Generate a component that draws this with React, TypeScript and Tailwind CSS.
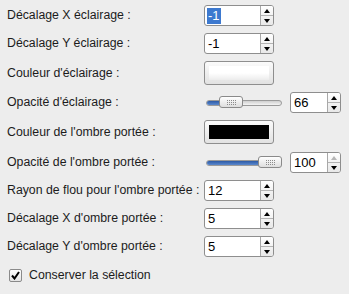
import React from 'react';

const FONT = { fontFamily: '"Liberation Sans", Arial, sans-serif' };

function UpArrow({ disabled }: { disabled?: boolean }) {
  return (
    <div
      className={`h-0 w-0 border-x-[3px] border-b-[4px] border-x-transparent ${
        disabled ? 'border-b-[#b5b5b5]' : 'border-b-black'
      }`}
    />
  );
}

function DownArrow() {
  return <div className="h-0 w-0 border-x-[3px] border-t-[4px] border-x-transparent border-t-black" />;
}

function Spin({
  value,
  selected,
  wide = true,
  upDisabled,
}: {
  value: string;
  selected?: boolean;
  wide?: boolean;
  upDisabled?: boolean;
}) {
  return (
    <div
      className={`flex h-[21px] ${wide ? 'w-[70px]' : 'w-[51px]'} overflow-hidden rounded-[3px] border border-[#8e8e8e] bg-white`}
    >
      <div className="flex flex-1 items-center pl-[2px] text-[13px] text-black">
        <span className={`px-px leading-[16px] ${selected ? 'bg-[#3d79cf] text-white' : ''}`}>{value}</span>
      </div>
      <div className="flex w-[13px] flex-col border-l border-[#a8a8a8] bg-gradient-to-b from-white to-[#e8e8e8]">
        <div className="flex flex-1 items-center justify-center border-b border-[#b3b3b3]">
          <UpArrow disabled={upDisabled} />
        </div>
        <div className="flex flex-1 items-center justify-center">
          <DownArrow />
        </div>
      </div>
    </div>
  );
}

function ColorButton({ color }: { color: 'white' | 'black' }) {
  return (
    <div className="h-[24px] w-[70px] rounded-[3px] border border-[#8e8e8e] bg-gradient-to-b from-[#fbfbfb] to-[#e2e2e2] p-[4px]">
      <div
        className={`h-full w-full ${
          color === 'black' ? 'bg-black' : 'bg-gradient-to-b from-white via-white to-[#ececec]'
        }`}
      />
    </div>
  );
}

function Grip() {
  const dots = [];
  for (let r = 0; r < 3; r++) {
    for (let c = 0; c < 5; c++) {
      dots.push(<rect key={`${r}-${c}`} x={c * 2} y={r * 2} width="1" height="1" fill="#8c8c8c" />);
    }
  }
  return (
    <svg width="9" height="5" viewBox="0 0 9 5">
      {dots}
    </svg>
  );
}

function Slider({ handleLeft }: { handleLeft: number }) {
  return (
    <div className="relative flex h-[21px] w-[80px] items-center px-[2px]">
      <div className="relative h-[6px] w-full overflow-hidden rounded-full border border-[#9a9a9a] bg-gradient-to-b from-[#cfcfcf] to-[#f4f4f4]">
        <div
          className="absolute inset-y-0 left-0 bg-gradient-to-b from-[#2c5aa6] to-[#5b88cc]"
          style={{ width: handleLeft + 4 }}
        />
      </div>
      <div
        className="absolute top-[4px] flex h-[12px] w-[24px] items-center justify-center rounded-[3px] border border-[#8a8a8a] bg-gradient-to-b from-white to-[#dedede]"
        style={{ left: handleLeft + 2 }}
      >
        <Grip />
      </div>
    </div>
  );
}

function Row({ label, children }: { label: string; children: React.ReactNode }) {
  return (
    <div className="flex items-center">
      <div className="w-[204px] shrink-0 whitespace-nowrap pl-[7px] text-[12.3px] text-[#1c1c1c]">{label}</div>
      <div className="flex items-center gap-[6px]">{children}</div>
    </div>
  );
}

export default function App() {
  return (
    <div className="h-[294px] w-[349px] bg-[#ededed]" style={FONT}>
      <div className="flex flex-col gap-[7px] pt-[5px]">
        <Row label="Décalage X éclairage :">
          <Spin value="-1" selected />
        </Row>
        <Row label="Décalage Y éclairage :">
          <Spin value="-1" />
        </Row>
        <Row label="Couleur d'éclairage :">
          <ColorButton color="white" />
        </Row>
        <Row label="Opacité d'éclairage :">
          <Slider handleLeft={13} />
          <Spin value="66" wide={false} />
        </Row>
        <Row label="Couleur de l'ombre portée :">
          <ColorButton color="black" />
        </Row>
        <div className="mt-px">
          <Row label="Opacité de l'ombre portée :">
            <Slider handleLeft={52} />
            <Spin value="100" wide={false} upDisabled />
          </Row>
        </div>
        <Row label="Rayon de flou pour l'ombre portée :">
          <Spin value="12" />
        </Row>
        <Row label="Décalage X d'ombre portée :">
          <Spin value="5" />
        </Row>
        <Row label="Décalage Y d'ombre portée :">
          <Spin value="5" />
        </Row>
        <div className="flex h-[22px] items-center gap-[7px] pl-[9px]">
          <div className="flex h-[13px] w-[13px] items-center justify-center rounded-[2px] border border-[#8a8a8a] bg-gradient-to-b from-white to-[#e4e4e4]">
            <svg width="9" height="9" viewBox="0 0 9 9">
              <path d="M1 4.5 L3.5 7.5 L8 1" fill="none" stroke="#000" strokeWidth="2" />
            </svg>
          </div>
          <span className="whitespace-nowrap text-[12.3px] text-[#1c1c1c]">Conserver la sélection</span>
        </div>
      </div>
    </div>
  );
}
